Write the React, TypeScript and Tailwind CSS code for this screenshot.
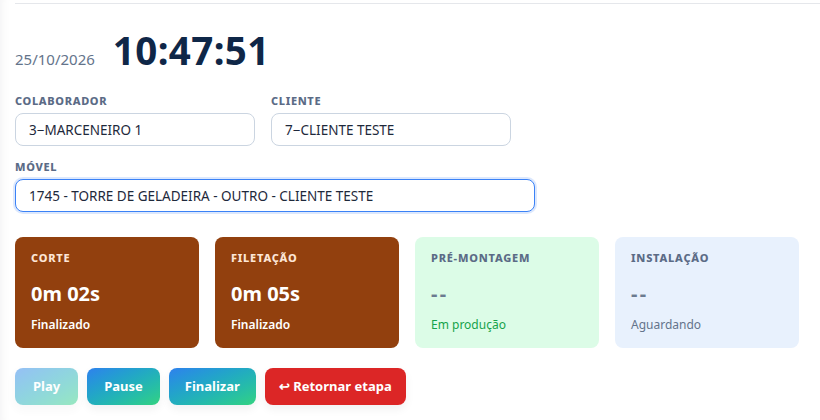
import { useState } from "react";

type Stage = {
  name: string;
  time: string;
  status: string;
  tone: "done" | "active" | "idle";
};

const stages: Stage[] = [
  { name: "CORTE", time: "0m 02s", status: "Finalizado", tone: "done" },
  { name: "FILETAÇÃO", time: "0m 05s", status: "Finalizado", tone: "done" },
  { name: "PRÉ-MONTAGEM", time: "--", status: "Em produção", tone: "active" },
  { name: "INSTALAÇÃO", time: "--", status: "Aguardando", tone: "idle" },
];

const cardTone = {
  done: "bg-[#92400e] text-white",
  active: "bg-[#dcfce7] text-[#6b7a90]",
  idle: "bg-[#e8f1fd] text-[#6b7a90]",
};

const statusTone = {
  done: "text-white font-semibold",
  active: "text-[#16a34a]",
  idle: "text-[#64748b]",
};

function Field({ label, value, className = "", focused = false }: { label: string; value: string; className?: string; focused?: boolean }) {
  return (
    <label className={`flex flex-col gap-[5px] ${className}`}>
      <span className="text-[11px] font-extrabold tracking-[0.06em] text-[#5b6b86] leading-[14px]">{label}</span>
      <input
        readOnly
        value={value}
        className={`h-[33px] rounded-[8px] border bg-white px-[13px] text-[13.5px] text-[#1e293b] outline-none ${
          focused ? "border-[#3b82f6] shadow-[0_0_0_2px_rgba(59,130,246,0.18)]" : "border-[#cbd5e1]"
        }`}
      />
    </label>
  );
}

export default function App() {
  const [running] = useState(false);

  return (
    <div
      className="min-h-[420px] w-[820px] bg-white shadow-[inset_10px_0_10px_-8px_rgba(15,23,42,0.05)]"
      style={{ fontFamily: '"Noto Sans", "Open Sans", sans-serif' }}
    >
      <div className="ml-[15px] pt-[3px]">
        <div className="border-t border-[#e5e7eb]" />
      </div>

      <div className="px-[15px]">
        {/* clock */}
        <div className="mt-[23px] flex items-baseline gap-[18px]">
          <span className="text-[15px] text-[#64748b]">25/10/2026</span>
          <span className="text-[38.5px] font-bold leading-[46px] tracking-[0.01em] text-[#0f2748]">10:47:51</span>
        </div>

        {/* selectors */}
        <div className="mt-[21px] flex gap-[16px]">
          <Field label="COLABORADOR" value="3−MARCENEIRO 1" className="w-[240px]" />
          <Field label="CLIENTE" value="7−CLIENTE TESTE" className="w-[240px]" />
        </div>
        <Field label="MÓVEL" value="1745 - TORRE DE GELADEIRA - OUTRO - CLIENTE TESTE" className="mt-[14px] w-[520px]" focused />

        {/* stage cards */}
        <div className="mt-[25px] grid w-[784px] grid-cols-4 gap-[16px]">
          {stages.map((s) => (
            <div key={s.name} className={`flex h-[111px] flex-col rounded-[8px] px-[16px] pt-[14px] ${cardTone[s.tone]}`}>
              <span
                className={`text-[11px] font-extrabold tracking-[0.07em] leading-[14px] ${
                  s.tone === "done" ? "text-[#fde6d6]" : "text-[#5b6b86]"
                }`}
              >
                {s.name}
              </span>
              <span className={`mt-[15px] text-[20px] font-bold leading-[28px] ${s.tone === "done" ? "" : "tracking-[0.12em]"}`}>
                {s.time}
              </span>
              <span className={`mt-[9px] text-[12px] leading-[16px] ${statusTone[s.tone]}`}>{s.status}</span>
            </div>
          ))}
        </div>

        {/* actions */}
        <div className="mt-[20px] flex gap-[9px]">
          <button
            disabled={!running}
            className="h-[37px] rounded-[8px] bg-gradient-to-br from-[#2f80ed] to-[#34d27f] px-[18px] text-[13px] font-bold text-white opacity-50 shadow-[0_4px_10px_rgba(15,23,42,0.06)]"
          >
            Play
          </button>
          <button className="h-[37px] rounded-[8px] bg-gradient-to-br from-[#2f80ed] to-[#34d27f] px-[17px] text-[13px] font-bold text-white shadow-[0_4px_10px_rgba(15,23,42,0.06)]">
            Pause
          </button>
          <button className="h-[37px] rounded-[8px] bg-gradient-to-br from-[#2f80ed] to-[#34d27f] px-[16px] text-[13px] font-bold text-white shadow-[0_4px_10px_rgba(15,23,42,0.06)]">
            Finalizar
          </button>
          <button className="h-[37px] rounded-[8px] bg-[#dc2626] px-[14px] text-[13px] font-bold text-white shadow-[0_4px_10px_rgba(15,23,42,0.06)]">
            ↩ Retornar etapa
          </button>
        </div>
      </div>
    </div>
  );
}
